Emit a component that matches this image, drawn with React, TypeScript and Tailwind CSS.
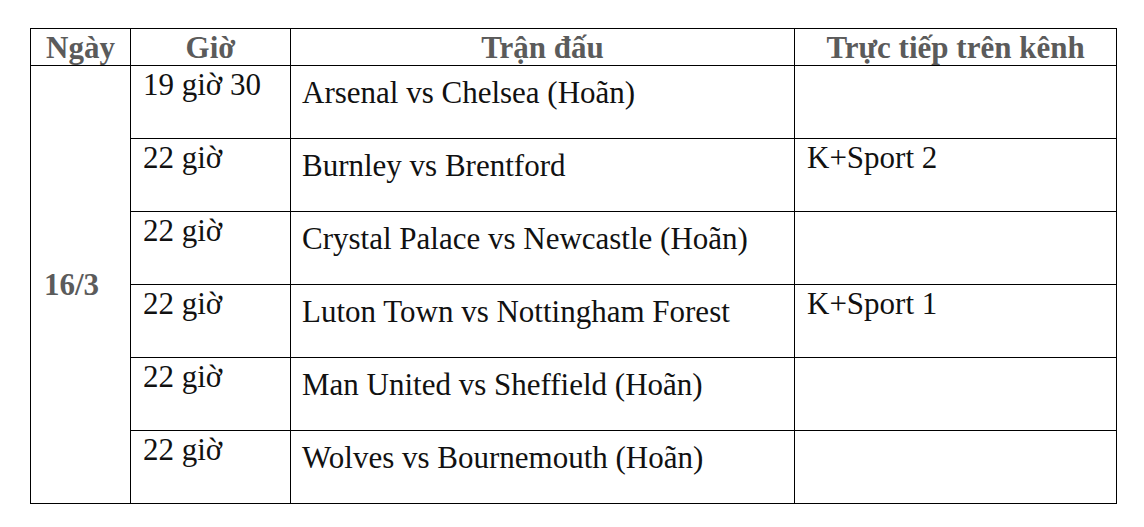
const matches = [
  { time: '19 giờ 30', match: 'Arsenal vs Chelsea (Hoãn)', channel: '' },
  { time: '22 giờ', match: 'Burnley vs Brentford', channel: 'K+Sport 2' },
  { time: '22 giờ', match: 'Crystal Palace vs Newcastle (Hoãn)', channel: '' },
  { time: '22 giờ', match: 'Luton Town vs Nottingham Forest', channel: 'K+Sport 1' },
  { time: '22 giờ', match: 'Man United vs Sheffield (Hoãn)', channel: '' },
  { time: '22 giờ', match: 'Wolves vs Bournemouth (Hoãn)', channel: '' },
]

export default function App() {
  return (
    <div className="w-[1144px] h-[527px] bg-white pt-[28px] pl-[30px] font-['Liberation_Serif','Times_New_Roman',serif]">
      <table className="table-fixed border-collapse w-[1086px] text-[31px] text-[#111]">
        <colgroup>
          <col className="w-[100px]" />
          <col className="w-[160px]" />
          <col className="w-[504px]" />
          <col className="w-[322px]" />
        </colgroup>
        <thead>
          <tr className="h-[37px]">
            {['Ngày', 'Giờ', 'Trận đấu', 'Trực tiếp trên kênh'].map(h => (
              <th
                key={h}
                className="border border-black p-0 text-center align-middle font-bold text-[#5b5b5b] leading-[35px]"
              >
                {h}
              </th>
            ))}
          </tr>
        </thead>
        <tbody>
          {matches.map((m, i) => (
            <tr key={i} className="h-[73px]">
              {i === 0 && (
                <td
                  rowSpan={matches.length}
                  className="border border-black pl-[13px] align-middle font-bold text-[#5b5b5b] leading-[32px]"
                >
                  16/3
                </td>
              )}
              <td className="border border-black pl-[12px] pt-[3px] align-top leading-[32px] whitespace-nowrap">
                {m.time}
              </td>
              <td className="border border-black pl-[11px] pt-[11px] align-top leading-[32px] whitespace-nowrap">
                {m.match}
              </td>
              <td className="border border-black pl-[12px] pt-[3px] align-top leading-[32px] whitespace-nowrap">
                {m.channel}
              </td>
            </tr>
          ))}
        </tbody>
      </table>
    </div>
  )
}
